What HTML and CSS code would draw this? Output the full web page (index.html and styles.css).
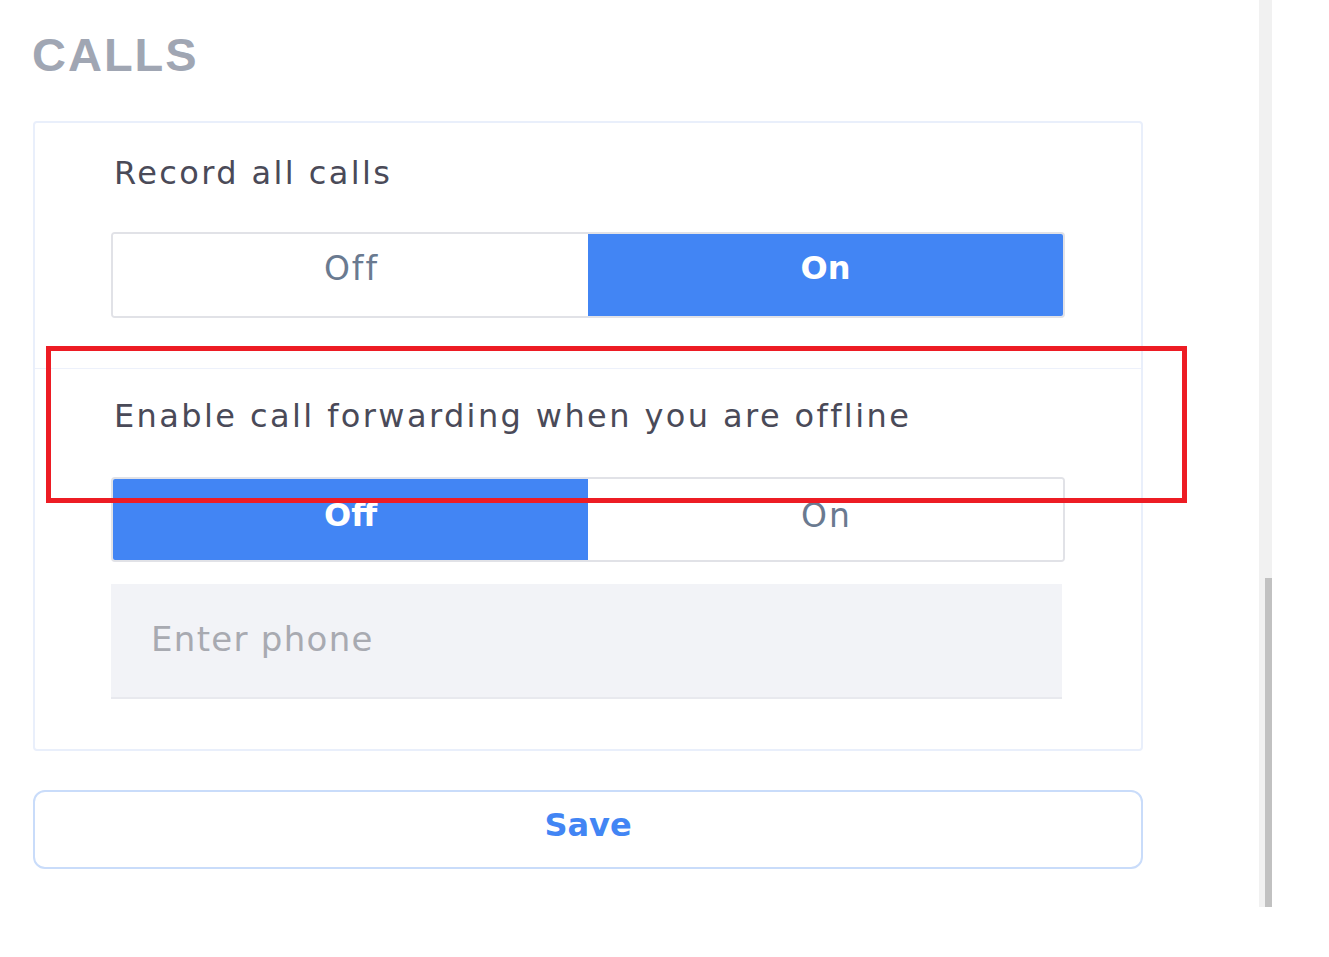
FILE: index.html
```html
<!DOCTYPE html>
<html lang="en">
<head>
<meta charset="utf-8">
<title>Calls settings</title>
<link rel="stylesheet" href="styles.css">
</head>
<body>
<div class="page">
  <main class="main">
    <h2 class="heading">CALLS</h2>
    <section class="card">
      <div class="setting setting-first">
        <div class="label">Record all calls</div>
        <div class="toggle">
          <button class="half">Off</button>
          <button class="half active">On</button>
        </div>
      </div>
      <div class="divider"></div>
      <div class="setting setting-second">
        <div class="label">Enable call forwarding when you are offline</div>
        <div class="toggle toggle-second">
          <button class="half active">Off</button>
          <button class="half">On</button>
        </div>
        <input class="phone" type="text" placeholder="Enter phone">
      </div>
    </section>
    <button class="save">Save</button>
  </main>
  <div class="scrollbar"><div class="thumb"></div></div>
  <div class="highlight"></div>
</div>
</body>
</html>
```

FILE: styles.css
```css
* { box-sizing: border-box; }

html, body {
  margin: 0;
  padding: 0;
  background: #ffffff;
}

body {
  font-family: "DejaVu Sans", "Open Sans", sans-serif;
}

.page {
  position: relative;
  display: flex;
  align-items: flex-start;
  width: 1329px;
  height: 957px;
}

.main {
  width: 1259px;
  padding: 28px 116px 0 33px;
}

.heading {
  margin: 0 0 39px -1px;
  font-family: "Liberation Sans", Arial, sans-serif;
  font-weight: 700;
  font-size: 47px;
  line-height: 54px;
  letter-spacing: 2px;
  color: #a0a6b3;
}

.card {
  border: 2px solid #e9effb;
  border-radius: 4px;
  background: #ffffff;
}

.setting {
  padding: 0 76px;
}

.setting-first {
  padding-top: 28px;
  padding-bottom: 50px;
}

.setting-second {
  padding-top: 25px;
  padding-bottom: 50px;
}

.divider {
  height: 1px;
  background: #edf1fb;
}

.label {
  font-family: "DejaVu Sans", "Open Sans", sans-serif;
  font-size: 32px;
  line-height: 44px;
  font-weight: 400;
  letter-spacing: 2.4px;
  color: #4a4a58;
  padding-left: 3px;
}

.toggle {
  display: flex;
  height: 86px;
  margin-top: 37px;
  border: 2px solid #e1e2e7;
  border-radius: 4px;
  overflow: hidden;
}

.toggle .half {
  padding-bottom: 14px;
}

.toggle-second {
  margin-top: 39px;
  height: 85px;
}

.toggle-second .half {
  padding-bottom: 9px;
}

.half {
  flex: 1;
  display: flex;
  align-items: center;
  justify-content: center;
  padding: 0;
  margin: 0;
  border: none;
  background: #ffffff;
  font-family: "DejaVu Sans", "Open Sans", sans-serif;
  font-size: 33px;
  font-weight: 400;
  letter-spacing: 2px;
  text-indent: 2px;
  color: #6a7a90;
}

.half.active {
  background: #4285f4;
  color: #ffffff;
  font-weight: 700;
  font-size: 32px;
  letter-spacing: 0;
  text-indent: 0;
}

.phone {
  display: block;
  width: 951px;
  height: 115px;
  margin-top: 22px;
  padding: 0 0 4px 40px;
  border: none;
  border-bottom: 2px solid #e8e9ee;
  background: #f2f3f7;
  font-family: "DejaVu Sans", "Open Sans", sans-serif;
  font-size: 34px;
  letter-spacing: 1.3px;
  color: #4a4a58;
  outline: none;
}

.phone::placeholder {
  color: #a8aab1;
}

.save {
  display: block;
  width: 100%;
  height: 79px;
  margin-top: 39px;
  border: 2px solid #c9dcfa;
  border-radius: 12px;
  background: #ffffff;
  font-family: "DejaVu Sans", "Open Sans", sans-serif;
  font-size: 32px;
  font-weight: 700;
  color: #4285f4;
  padding: 0 0 10px 0;
}

.scrollbar {
  width: 13px;
  height: 907px;
  background: #f1f1f1;
  padding-top: 578px;
  padding-left: 6px;
}

.thumb {
  width: 7px;
  height: 329px;
  background: #c1c1c1;
}

.highlight {
  position: absolute;
  left: 46px;
  top: 346px;
  width: 1141px;
  height: 157px;
  border: 5px solid #ed1c24;
  pointer-events: none;
}
```
